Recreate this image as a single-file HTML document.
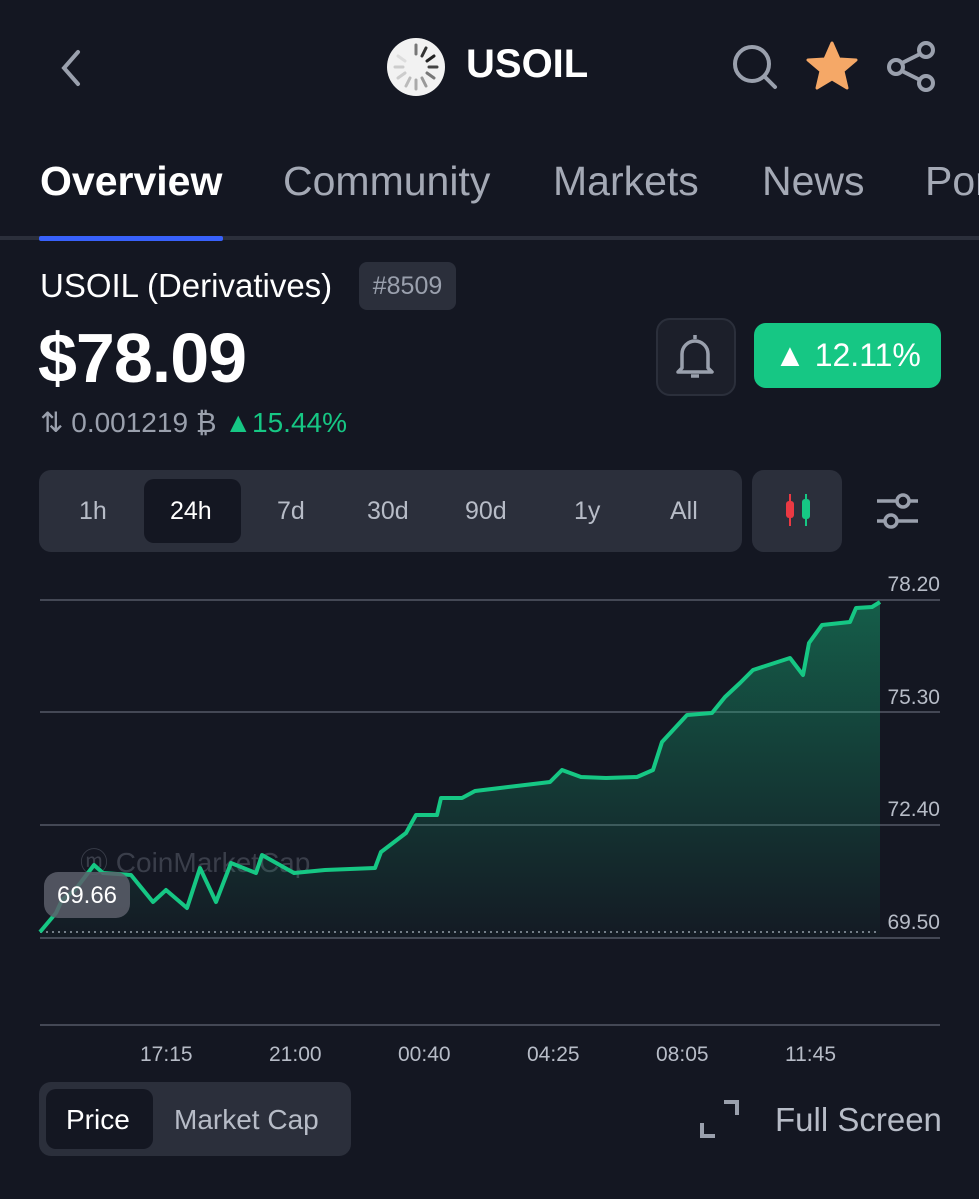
<!DOCTYPE html><html><head><style>
body{margin:0;width:979px;height:1199px;background:#141722;font-family:"Liberation Sans",sans-serif;position:relative;overflow:hidden;color:#fff}
.a{position:absolute}
.tab{position:absolute;top:158px;font-size:41px;color:#a4a9b5}
.tf{position:absolute;top:497px;font-size:25px;color:#b7bcc7}
.lab{position:absolute;right:39px;font-size:21px;color:#b7bcc7}
.tm{position:absolute;top:1043px;font-size:21px;color:#b7bcc7}
</style></head><body>
<svg class="a" style="left:52px;top:48px" width="36" height="40"><path d="M26 4 L12 20 L26 36" stroke="#9aa0ad" stroke-width="4" fill="none" stroke-linecap="round"/></svg>
<svg class="a" style="left:386px;top:37px" width="60" height="60"><circle cx="30" cy="30" r="29" fill="#f2f2f2"/><g stroke="#777" stroke-width="3" stroke-linecap="round"><line x1="30" y1="8" x2="30" y2="17"/><line x1="40" y1="11" x2="36" y2="19" stroke="#333"/><line x1="48" y1="19" x2="41" y2="24" stroke="#222"/><line x1="51" y1="30" x2="43" y2="30" stroke="#444"/><line x1="48" y1="41" x2="41" y2="36"/><line x1="40" y1="49" x2="36" y2="41" stroke="#999"/><line x1="30" y1="52" x2="30" y2="43" stroke="#aaa"/><line x1="20" y1="49" x2="24" y2="41" stroke="#bbb"/><line x1="12" y1="41" x2="19" y2="36" stroke="#ccc"/><line x1="9" y1="30" x2="17" y2="30" stroke="#ccc"/><line x1="12" y1="19" x2="19" y2="24" stroke="#ddd"/></g></svg>
<div class="a" style="left:466px;top:42px;font-size:40px;font-weight:bold">USOIL</div>
<svg class="a" style="left:730px;top:42px" width="50" height="50"><circle cx="22" cy="22" r="17" stroke="#9aa0ad" stroke-width="4" fill="none"/><line x1="35" y1="35" x2="45" y2="45" stroke="#9aa0ad" stroke-width="4" stroke-linecap="round"/></svg>
<svg class="a" style="left:805px;top:40px" width="54" height="52"><path d="M27 3 L34 19 L51 20 L38 31 L42 48 L27 39 L12 48 L16 31 L3 20 L20 19 Z" fill="#f5a867" stroke="#f5a867" stroke-width="3" stroke-linejoin="round"/></svg>
<svg class="a" style="left:884px;top:40px" width="56" height="52"><g stroke="#9aa0ad" stroke-width="4" fill="none"><circle cx="42" cy="10" r="7"/><circle cx="12" cy="27" r="7"/><circle cx="42" cy="43" r="7"/><line x1="18" y1="23" x2="36" y2="14"/><line x1="18" y1="31" x2="36" y2="40"/></g></svg>
<div class="tab" style="left:40px;color:#fff;font-weight:bold">Overview</div>
<div class="tab" style="left:283px">Community</div>
<div class="tab" style="left:553px">Markets</div>
<div class="tab" style="left:762px">News</div>
<div class="tab" style="left:925px">Por</div>
<div class="a" style="left:0;top:236px;width:979px;height:4px;background:#2b2f3b"></div>
<div class="a" style="left:39px;top:236px;width:184px;height:5px;background:#3861fb;border-radius:2px"></div>
<div class="a" style="left:40px;top:267px;font-size:33px">USOIL (Derivatives)</div>
<div class="a" style="left:359px;top:262px;width:97px;height:48px;background:#2b2f3b;border-radius:8px;color:#9aa0ad;font-size:25px;line-height:48px;text-align:center">#8509</div>
<div class="a" style="left:38px;top:318px;font-size:70px;font-weight:bold;letter-spacing:-1px">$78.09</div>
<div class="a" style="left:40px;top:406px;font-size:28px;color:#9aa0ad">⇅ 0.001219 ₿ <span style="color:#16c784">▲15.44%</span></div>
<div class="a" style="left:656px;top:318px;width:76px;height:74px;border:2px solid #2b2f3b;border-radius:14px;background:#1c1f2a"></div>
<svg class="a" style="left:672px;top:330px" width="46" height="52"><path d="M23 5 V9 M10 38 V24 a13 13 0 0 1 26 0 V38 L40 42 H6 Z M19 46 h8" stroke="#9aa0ad" stroke-width="3.5" fill="none" stroke-linejoin="round"/></svg>
<div class="a" style="left:754px;top:323px;width:187px;height:65px;background:#16c784;border-radius:12px;font-size:32px;line-height:65px;text-align:center">▲ 12.11%</div>
<div class="a" style="left:39px;top:470px;width:703px;height:82px;background:#2b2f3b;border-radius:12px"></div>
<div class="a" style="left:144px;top:479px;width:97px;height:64px;background:#141722;border-radius:10px"></div>
<div class="tf" style="left:79px">1h</div><div class="tf" style="left:170px;color:#fff">24h</div><div class="tf" style="left:277px">7d</div><div class="tf" style="left:367px">30d</div><div class="tf" style="left:465px">90d</div><div class="tf" style="left:574px">1y</div><div class="tf" style="left:670px">All</div>
<div class="a" style="left:752px;top:470px;width:90px;height:82px;background:#2b2f3b;border-radius:12px"></div>
<svg class="a" style="left:780px;top:490px" width="36" height="40"><line x1="10" y1="4" x2="10" y2="36" stroke="#ea3943" stroke-width="2"/><rect x="6" y="11" width="8" height="17" rx="3" fill="#ea3943"/><line x1="26" y1="4" x2="26" y2="36" stroke="#16c784" stroke-width="2"/><rect x="22" y="9" width="8" height="20" rx="3" fill="#16c784"/></svg>
<svg class="a" style="left:874px;top:490px" width="46" height="42"><g stroke="#9aa0ad" stroke-width="3.5" fill="none"><line x1="3" y1="11" x2="22" y2="11"/><circle cx="29" cy="11" r="6"/><line x1="36" y1="11" x2="44" y2="11"/><line x1="3" y1="31" x2="10" y2="31"/><circle cx="17" cy="31" r="6"/><line x1="24" y1="31" x2="44" y2="31"/></g></svg>
<svg class="a" style="left:0;top:570px" width="979" height="470">
<defs><linearGradient id="g" x1="0" y1="0" x2="0" y2="1"><stop offset="0" stop-color="#16c784" stop-opacity=".4"/><stop offset="1" stop-color="#16c784" stop-opacity="0.02"/></linearGradient></defs>
<g stroke="#444855" stroke-width="2"><line x1="40" y1="30" x2="940" y2="30"/><line x1="40" y1="142" x2="940" y2="142"/><line x1="40" y1="255" x2="940" y2="255"/><line x1="40" y1="368" x2="940" y2="368"/><line x1="40" y1="455" x2="940" y2="455"/></g>
<line x1="40" y1="362" x2="880" y2="362" stroke="#777c88" stroke-width="2" stroke-dasharray="2 4"/>
<text x="80" y="302" font-size="28" fill="#3a3e4a" font-family="Liberation Sans">ⓜ CoinMarketCap</text>
<path d="M40 362 L56 343 L62 330 L75 320 L94 295 L103 303 L131 305 L153 332 L166 320 L187 338 L200 298 L216 332 L231 293 L256 303 L262 285 L294 303 L325 300 L375 298 L381 282 L406 263 L416 245 L437 245 L441 228 L462 228 L475 221 L500 218 L525 215 L550 212 L562 200 L581 207 L606 208 L637 207 L653 200 L662 172 L687 145 L712 143 L725 127 L740 113 L753 100 L790 88 L803 105 L809 73 L822 55 L850 52 L856 38 L872 37 L880 32 L880 368 L40 368 Z" fill="url(#g)"/>
<path d="M40 362 L56 343 L62 330 L75 320 L94 295 L103 303 L131 305 L153 332 L166 320 L187 338 L200 298 L216 332 L231 293 L256 303 L262 285 L294 303 L325 300 L375 298 L381 282 L406 263 L416 245 L437 245 L441 228 L462 228 L475 221 L500 218 L525 215 L550 212 L562 200 L581 207 L606 208 L637 207 L653 200 L662 172 L687 145 L712 143 L725 127 L740 113 L753 100 L790 88 L803 105 L809 73 L822 55 L850 52 L856 38 L872 37 L880 32" fill="none" stroke="#16c784" stroke-width="4" stroke-linejoin="round"/>
<rect x="44" y="302" width="86" height="46" rx="14" fill="#5a5e6a" opacity=".85"/><text x="87" y="333" font-size="24" fill="#fff" text-anchor="middle" font-family="Liberation Sans">69.66</text>
</svg>
<div class="lab" style="top:573px">78.20</div><div class="lab" style="top:686px">75.30</div><div class="lab" style="top:798px">72.40</div><div class="lab" style="top:911px">69.50</div>
<div class="tm" style="left:140px">17:15</div><div class="tm" style="left:269px">21:00</div><div class="tm" style="left:398px">00:40</div><div class="tm" style="left:527px">04:25</div><div class="tm" style="left:656px">08:05</div><div class="tm" style="left:785px">11:45</div>
<div class="a" style="left:39px;top:1082px;width:312px;height:74px;background:#2b2f3b;border-radius:12px"></div>
<div class="a" style="left:46px;top:1089px;width:107px;height:60px;background:#141722;border-radius:10px"></div>
<div class="a" style="left:66px;top:1104px;font-size:28px">Price</div>
<div class="a" style="left:174px;top:1104px;font-size:28px;color:#b7bcc7">Market Cap</div>
<svg class="a" style="left:698px;top:1098px" width="44" height="42"><g stroke="#9aa0ad" stroke-width="4" fill="none"><path d="M26 4 H39 V17"/><path d="M4 25 V38 H17"/></g></svg>
<div class="a" style="left:775px;top:1101px;font-size:33px;color:#b7bcc7">Full Screen</div>
</body></html>
